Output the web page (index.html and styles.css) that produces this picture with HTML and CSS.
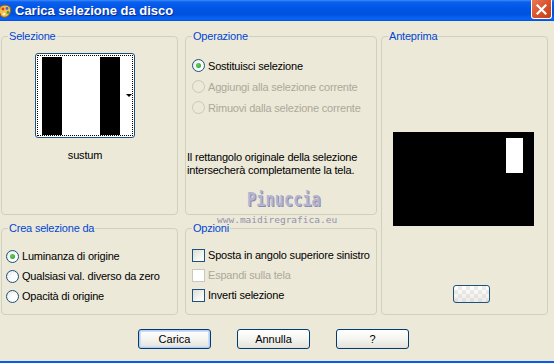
FILE: index.html
```html
<!DOCTYPE html>
<html lang="it">
<head>
  <meta charset="UTF-8">
  <title>Carica selezione da disco</title>
  <link rel="stylesheet" href="styles.css">
</head>
<body>
<div class="window">
  <div class="titlebar">
    <svg class="app-icon" width="13" height="15" viewBox="0 0 13 15">
      <path d="M1 3 Q6 -1 11 3 Q13 7 10 11 Q6 15 2 12 Q-1 8 1 3 Z" fill="#f2c14a" stroke="#9a5a1c" stroke-width="1"/>
      <circle cx="4" cy="5" r="1.4" fill="#d83a2a"/>
      <circle cx="8" cy="4.5" r="1.4" fill="#3a6fd8"/>
      <circle cx="9" cy="8.5" r="1.4" fill="#3aa845"/>
      <circle cx="5" cy="10" r="1.3" fill="#f4f4f4"/>
    </svg>
    <span class="title">Carica selezione da disco</span>
    <div class="close">
      <svg width="11" height="11" viewBox="0 0 11 11">
        <path d="M1.5 1.5 L9.5 9.5 M9.5 1.5 L1.5 9.5" stroke="#fff" stroke-width="2.2" stroke-linecap="square"/>
      </svg>
    </div>
  </div>

  <div class="dialog">
    <div class="groups">
      <fieldset class="group g-sel">
        <legend>Selezione</legend>
        <div class="thumb-wrap">
          <div class="thumb">
            <div class="thumb-frame"><div class="thumb-img"></div></div>
            <span class="thumb-arrow"></span>
          </div>
          <div class="thumb-name">sustum</div>
        </div>
      </fieldset>

      <fieldset class="group g-op">
        <legend>Operazione</legend>
        <div class="options op-list">
          <div class="opt"><span class="radio checked"></span>Sostituisci selezione</div>
          <div class="opt disabled"><span class="radio"></span>Aggiungi alla selezione corrente</div>
          <div class="opt disabled"><span class="radio"></span>Rimuovi dalla selezione corrente</div>
        </div>
        <p class="note">Il rettangolo originale della selezione<br>intersecherà completamente la tela.</p>
      </fieldset>

      <fieldset class="group g-prev">
        <legend>Anteprima</legend>
        <div class="preview"><div class="preview-sel"></div></div>
        <div class="bg-btn"></div>
      </fieldset>

      <fieldset class="group g-crea">
        <legend>Crea selezione da</legend>
        <div class="options crea-list">
          <div class="opt"><span class="radio checked"></span>Luminanza di origine</div>
          <div class="opt"><span class="radio"></span>Qualsiasi val. diverso da zero</div>
          <div class="opt"><span class="radio"></span>Opacità di origine</div>
        </div>
      </fieldset>

      <fieldset class="group g-opz">
        <legend>Opzioni</legend>
        <div class="options opz-list">
          <div class="opt"><span class="check"></span>Sposta in angolo superiore sinistro</div>
          <div class="opt disabled"><span class="check"></span>Espandi sulla tela</div>
          <div class="opt"><span class="check"></span>Inverti selezione</div>
        </div>
      </fieldset>
    </div>

    <div class="buttons">
      <button class="btn default">Carica</button>
      <button class="btn">Annulla</button>
      <button class="btn">?</button>
    </div>
  </div>

  <!-- watermark stamped over the dialog -->
  <div class="wm-name">Pinuccia</div>
  <div class="wm-site">www.maidiregrafica.eu</div>
</div>
</body>
</html>
```

FILE: styles.css
```css
body {
  margin: 0;
  font-family: "Liberation Sans", Arial, sans-serif;
  font-size: 11px;
  letter-spacing: -0.2px;
  color: #000;
  background: #ece9d8;
}
.window {
  position: relative;
  width: 554px;
  height: 363px;
  box-sizing: border-box;
  display: flex;
  flex-direction: column;
  background: #ece9d8;
  border-bottom: 2px solid #0a5af0;
  overflow: hidden;
}
.titlebar {
  height: 21px;
  flex: none;
  display: flex;
  align-items: center;
  background: linear-gradient(#3d8cf8 0, #0a5fee 2px, #0055e5 40%, #0052e0 70%, #0a66f8 90%, #0050d8 100%);
  color: #fff;
}
.app-icon {
  margin-left: -1px;
  margin-top: 1px;
}
.title {
  margin-left: 3px;
  font-weight: bold;
  font-size: 13px;
  letter-spacing: 0;
  text-shadow: 1px 1px #0c2a8c;
}
.close {
  align-self: flex-start;
  margin-left: auto;
  margin-right: 2px;
  width: 19px;
  height: 18px;
  display: flex;
  align-items: center;
  justify-content: center;
  background: linear-gradient(135deg, #e97a58, #d9532d 50%, #c23c18);
  border: 1px solid #fff;
  border-top: none;
  border-radius: 0 0 3px 3px;
}
.dialog {
  flex: 1;
  padding: 8px 0 0 1px;
}
.groups {
  display: grid;
  grid-template-columns: 177px 203px 167px;
  grid-template-rows: 186px 94px;
  row-gap: 6px;
}
.group {
  margin: 0;
  padding: 0 6px;
  min-width: 0;
  box-sizing: border-box;
  border: 1px solid #d0d0bf;
  border-radius: 4px;
}
.group legend {
  padding: 0 1px;
  line-height: 14px;
  color: #0046d5;
}
.g-op, .g-opz {
  margin: 0 4px 0 7px;
}
.g-prev {
  grid-row: 1 / 3;
  grid-column: 3;
}

/* selection thumbnail */
.thumb-wrap {
  width: 100px;
  margin: 10px 0 0 27px;
}
.thumb {
  position: relative;
  height: 85px;
  box-sizing: border-box;
  border: 1px solid #1c5180;
  border-radius: 3px;
  background: #fff;
  padding: 1px;
}
.thumb-frame {
  height: 81px;
  box-sizing: border-box;
  border: 1px dotted #000;
  padding-top: 1px;
}
.thumb-img {
  height: 78px;
  background: linear-gradient(to right, #fff 4px, #000 4px 24px, #fff 24px 62px, #000 62px 82px, #fff 82px);
}
.thumb-arrow {
  position: absolute;
  right: 2px;
  top: 40px;
  border-left: 3px solid transparent;
  border-right: 3px solid transparent;
  border-top: 3px solid #000;
}
.thumb-name {
  margin-top: 10px;
  line-height: 14px;
  text-align: center;
}

/* radios and checkboxes */
.options {
  display: flex;
  flex-direction: column;
}
.opt {
  display: flex;
  align-items: center;
  gap: 3px;
  height: 20px;
  white-space: nowrap;
}
.opt.disabled {
  color: #aca899;
}
.op-list {
  margin-top: 12px;
}
.op-list .opt {
  height: 21px;
}
.crea-list {
  margin: 11px 0 0 -2px;
}
.opz-list {
  margin-top: 10px;
}
.radio {
  width: 13px;
  height: 13px;
  box-sizing: border-box;
  flex: none;
  border: 1px solid #1c5180;
  border-radius: 50%;
  background: radial-gradient(circle at 65% 65%, #fff 30%, #e2e2da 100%);
  display: flex;
  align-items: center;
  justify-content: center;
}
.radio.checked::after {
  content: "";
  width: 5px;
  height: 5px;
  border-radius: 50%;
  background: radial-gradient(circle at 40% 40%, #5fd35f, #1f9a1f);
}
.disabled .radio {
  border-color: #cac8bb;
  background: #ece9d8;
}
.check {
  width: 13px;
  height: 13px;
  box-sizing: border-box;
  flex: none;
  border: 1px solid #1c5180;
  background: linear-gradient(135deg, #dcdcd4, #f4f4f0 60%, #fff);
}
.disabled .check {
  border-color: #cac8bb;
  background: #fff;
}
.note {
  margin: 33px 0 0 -5px;
  line-height: 13px;
}

/* preview */
.preview {
  width: 141px;
  height: 94px;
  margin: 89px 0 0 5px;
  box-sizing: border-box;
  padding: 6px 0 0 113px;
  background: #000;
}
.preview-sel {
  width: 17px;
  height: 35px;
  background: #fff;
}
.bg-btn {
  width: 37px;
  height: 18px;
  margin: 59px 0 0 65px;
  box-sizing: border-box;
  border: 1px solid #1c5180;
  border-radius: 3px;
  background:
    linear-gradient(45deg, rgba(200,200,200,.35) 25%, transparent 25% 75%, rgba(200,200,200,.35) 75%) 0 0 / 8px 8px,
    linear-gradient(45deg, rgba(200,200,200,.35) 25%, transparent 25% 75%, rgba(200,200,200,.35) 75%) 4px 4px / 8px 8px,
    linear-gradient(#fff, #ecebe6);
}

/* buttons */
.buttons {
  display: flex;
  justify-content: center;
  gap: 26px;
  margin-top: 14px;
  padding-right: 8px;
}
.btn {
  width: 73px;
  height: 20px;
  padding: 0;
  font-family: inherit;
  font-size: 11px;
  color: #000;
  border: 1px solid #003c74;
  border-radius: 3px;
  background: linear-gradient(#fff, #f4f4f0 50%, #e3e2da);
}
.btn.default {
  box-shadow: inset 0 0 0 1px #b7cdf4, inset 0 0 0 2px #cfdcf6;
}

/* watermark */
.wm-name {
  position: absolute;
  left: 247px;
  top: 190px;
  font-family: "DejaVu Sans Mono", monospace;
  font-weight: bold;
  font-size: 15px;
  letter-spacing: 0.2px;
  color: #b4b4d0;
  text-shadow: 1px 1px #8c8cab;
  transform: scaleY(1.35);
}
.wm-site {
  position: absolute;
  left: 217px;
  top: 214px;
  font-family: "DejaVu Sans Mono", monospace;
  font-size: 9.5px;
  letter-spacing: 0;
  color: #9292ac;
}
```
